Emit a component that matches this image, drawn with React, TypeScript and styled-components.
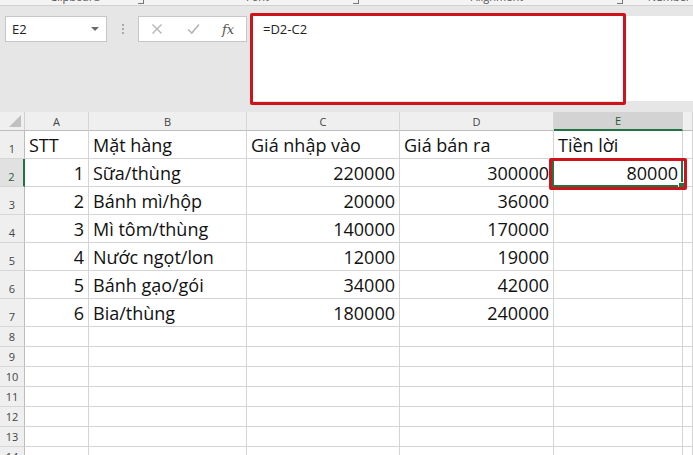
import React from 'react'
import styled, { createGlobalStyle, css } from 'styled-components'

const GlobalStyle = createGlobalStyle`
  html, body {
    margin: 0;
    padding: 0;
    overflow: hidden;
    background: #ffffff;
  }
  body {
    font-family: 'Open Sans', 'Noto Sans', 'Liberation Sans', sans-serif;
  }
`

const EXCEL_GREEN = '#217346'
const GRID = '#d4d4d4'

const Window = styled.div`
  width: 693px;
  height: 455px;
  overflow: hidden;
  background: #e6e6e6;
  display: flex;
  flex-direction: column;
`

// phần chân ribbon bị cắt phía trên
const RibbonEdge = styled.div`
  height: 5px;
  flex: none;
  background: #f3f3f3;
  border-bottom: 1px solid #d2d2d2;
  display: flex;
  overflow: hidden;
`

const RibbonGroup = styled.div<{ $w: number }>`
  width: ${(p) => p.$w}px;
  flex: none;
  display: flex;
  justify-content: center;
  position: relative;
  font-size: 11px;
  line-height: 12px;
  color: #555;
  margin-top: -9px;
`

const Launcher = styled.span`
  position: absolute;
  right: 6px;
  top: 7px;
  width: 5px;
  height: 5px;
  border-right: 1px solid #777;
  border-bottom: 1px solid #777;
`

const FormulaBar = styled.div`
  display: flex;
  align-items: flex-start;
  padding: 10px 0 11px 5px;
  flex: none;
`

const NameBox = styled.div`
  width: 102px;
  height: 26px;
  box-sizing: border-box;
  background: #fff;
  border: 1px solid #c6c6c6;
  display: flex;
  align-items: center;
  justify-content: space-between;
  padding: 0 7px 0 6px;
  font-size: 13px;
  color: #222;
`

const DropArrow = styled.span`
  width: 0;
  height: 0;
  border-left: 4px solid transparent;
  border-right: 4px solid transparent;
  border-top: 4px solid #6a6a6a;
`

const Grip = styled.div`
  width: 31px;
  height: 26px;
  display: flex;
  flex-direction: column;
  align-items: center;
  justify-content: center;
  gap: 2px;
  span {
    width: 2px;
    height: 2px;
    background: #a8a8a8;
  }
`

const FxButtons = styled.div`
  width: 109px;
  height: 26px;
  box-sizing: border-box;
  background: #fff;
  border: 1px solid #c6c6c6;
  display: flex;
  align-items: center;
  padding: 0 0 0 12px;
  gap: 24px;
`

const FxLabel = styled.span`
  font-family: 'DejaVu Serif', 'Liberation Serif', serif;
  font-style: italic;
  font-size: 13px;
  color: #555;
  margin-left: -2px;
`

const FormulaInput = styled.div`
  flex: 1;
  height: 85px;
  margin-left: 4px;
  background: #fff;
  position: relative;
  padding: 4px 12px;
  box-sizing: border-box;
  font-size: 13px;
  color: #222;
`

const RedMark = styled.div`
  position: absolute;
  border: 3px solid #d0121b;
  border-radius: 2px;
  pointer-events: none;
`

const FormulaMark = styled(RedMark)`
  left: -1px;
  top: -3px;
  width: 376px;
  height: 92px;
  box-sizing: border-box;
`

const CellMark = styled(RedMark)`
  left: -5px;
  right: -5px;
  top: -1px;
  bottom: -4px;
`

const Sheet = styled.div`
  display: grid;
  grid-template-columns: 25px 64px 158px 153px 154px 129px 1fr;
  grid-template-rows: 19px repeat(7, 28px) repeat(8, 20px);
  background: #fff;
  flex: none;
`

const Corner = styled.div`
  background: #efefef;
  border-right: 1px solid #cfcfcf;
  border-bottom: 1px solid #bdbdbd;
  position: relative;
  &::after {
    content: '';
    position: absolute;
    right: 3px;
    bottom: 3px;
    border-left: 12px solid transparent;
    border-bottom: 12px solid #c0c0c0;
  }
`

const ColHeader = styled.div<{ $active?: boolean }>`
  background: #efefef;
  border-right: 1px solid #d6d6d6;
  border-bottom: 1px solid #bdbdbd;
  display: flex;
  align-items: center;
  justify-content: center;
  font-size: 11px;
  color: #444;
  ${(p) =>
    p.$active &&
    css`
      background: #d3d3d3;
      border-bottom: 2px solid ${EXCEL_GREEN};
      color: #1f5c38;
    `}
`

const RowHeader = styled.div<{ $active?: boolean }>`
  background: #efefef;
  border-right: 1px solid #bdbdbd;
  border-bottom: 1px solid #d6d6d6;
  display: flex;
  align-items: flex-end;
  justify-content: center;
  padding-bottom: 3px;
  box-sizing: border-box;
  font-size: 11px;
  line-height: 13px;
  color: #444;
  ${(p) =>
    p.$active &&
    css`
      background: #e1e1e1;
      border-right: 2px solid ${EXCEL_GREEN};
      color: #1f5c38;
    `}
`

const Cell = styled.div<{ $num?: boolean }>`
  border-right: 1px solid ${GRID};
  border-bottom: 1px solid ${GRID};
  display: flex;
  align-items: flex-end;
  justify-content: ${(p) => (p.$num ? 'flex-end' : 'flex-start')};
  padding: 0 4px 1px 4px;
  box-sizing: border-box;
  font-size: 18px;
  line-height: 24px;
  color: #111;
  white-space: nowrap;
  min-width: 0;
`

const ActiveCell = styled(Cell)`
  position: relative;
`

const Selection = styled.div`
  position: absolute;
  left: -2px;
  right: -1px;
  top: -1px;
  bottom: -1px;
  border: 2px solid ${EXCEL_GREEN};
  pointer-events: none;
  &::after {
    content: '';
    position: absolute;
    right: -4px;
    bottom: -4px;
    width: 5px;
    height: 5px;
    background: ${EXCEL_GREEN};
    border: 1px solid #fff;
  }
`

const ribbonGroups = [
  { label: 'Clipboard', w: 150 },
  { label: 'Font', w: 215 },
  { label: 'Alignment', w: 264 },
  { label: 'Number', w: 80, noLauncher: true },
]

const columns = ['A', 'B', 'C', 'D', 'E', 'F']

type Value = string | number | null
const data: Value[][] = [
  ['STT', 'Mặt hàng', 'Giá nhập vào', 'Giá bán ra', 'Tiền lời'],
  [1, 'Sữa/thùng', 220000, 300000, 80000],
  [2, 'Bánh mì/hộp', 20000, 36000, null],
  [3, 'Mì tôm/thùng', 140000, 170000, null],
  [4, 'Nước ngọt/lon', 12000, 19000, null],
  [5, 'Bánh gạo/gói', 34000, 42000, null],
  [6, 'Bia/thùng', 180000, 240000, null],
]

const TOTAL_ROWS = 15

const XIcon = () => (
  <svg width="12" height="12" viewBox="0 0 12 12">
    <path d="M1.5 1.5 L10.5 10.5 M10.5 1.5 L1.5 10.5" stroke="#b4b4b4" strokeWidth="1.3" />
  </svg>
)

const CheckIcon = () => (
  <svg width="13" height="12" viewBox="0 0 13 12">
    <path d="M1 6.5 L4.8 10 L12 1.5" stroke="#b4b4b4" strokeWidth="1.6" fill="none" />
  </svg>
)

export default function App() {
  return (
    <Window>
      <GlobalStyle />
      <RibbonEdge>
        {ribbonGroups.map((g) => (
          <RibbonGroup key={g.label} $w={g.w}>
            {g.label}
            {!g.noLauncher && <Launcher />}
          </RibbonGroup>
        ))}
      </RibbonEdge>

      <FormulaBar>
        <NameBox>
          E2
          <DropArrow />
        </NameBox>
        <Grip>
          <span />
          <span />
          <span />
        </Grip>
        <FxButtons>
          <XIcon />
          <CheckIcon />
          <FxLabel>fx</FxLabel>
        </FxButtons>
        <FormulaInput>
          =D2-C2
          <FormulaMark />
        </FormulaInput>
      </FormulaBar>

      <Sheet>
        <Corner />
        {columns.map((c) => (
          <ColHeader key={c} $active={c === 'E'}>
            {c === 'F' ? '' : c}
          </ColHeader>
        ))}
        {Array.from({ length: TOTAL_ROWS }, (_, r) => {
          const row = data[r] || []
          return (
            <React.Fragment key={r}>
              <RowHeader $active={r === 1}>{r + 1}</RowHeader>
              {columns.map((c, ci) => {
                const v = row[ci] ?? null
                const isNum = typeof v === 'number'
                if (r === 1 && c === 'E') {
                  return (
                    <ActiveCell key={c} $num>
                      {v}
                      <Selection />
                      <CellMark />
                    </ActiveCell>
                  )
                }
                return (
                  <Cell key={c} $num={isNum}>
                    {v}
                  </Cell>
                )
              })}
            </React.Fragment>
          )
        })}
      </Sheet>
    </Window>
  )
}
